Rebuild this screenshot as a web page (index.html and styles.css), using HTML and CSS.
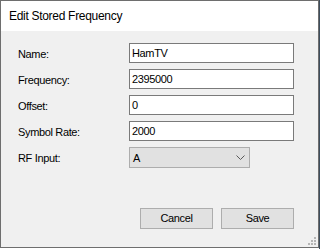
FILE: index.html
```html
<!DOCTYPE html>
<html>
<head>
<meta charset="utf-8">
<link rel="stylesheet" href="styles.css">
</head>
<body>
<div class="window">
  <div class="titlebar">Edit Stored Frequency</div>
  <div class="content">
    <div class="form">
      <div class="row"><div class="label">Name:</div><div class="field">HamTV</div></div>
      <div class="row"><div class="label">Frequency:</div><div class="field">2395000</div></div>
      <div class="row"><div class="label">Offset:</div><div class="field">0</div></div>
      <div class="row"><div class="label">Symbol Rate:</div><div class="field">2000</div></div>
      <div class="row combo-row"><div class="label">RF Input:</div>
        <div class="combo"><span>A</span>
          <svg class="chev" width="9" height="5" viewBox="0 0 9 5"><path d="M0.5 0.5 L4.5 4.5 L8.5 0.5" fill="none" stroke="#5a5a5a" stroke-width="1"/></svg>
        </div>
      </div>
    </div>
    <div class="buttons">
      <div class="btn">Cancel</div>
      <div class="btn">Save</div>
    </div>
    <svg class="grip" width="9" height="9" viewBox="0 0 9 9">
      <rect x="6" y="0" width="2" height="2" fill="#b5b5b5"/>
      <rect x="3" y="3" width="2" height="2" fill="#b5b5b5"/>
      <rect x="6" y="3" width="2" height="2" fill="#b5b5b5"/>
      <rect x="0" y="6" width="2" height="2" fill="#b5b5b5"/>
      <rect x="3" y="6" width="2" height="2" fill="#b5b5b5"/>
      <rect x="6" y="6" width="2" height="2" fill="#b5b5b5"/>
    </svg>
  </div>
</div>
</body>
</html>
```
FILE: styles.css
```css
html, body {
  margin: 0;
  padding: 0;
}
body {
  background: linear-gradient(to right, #ffffff 319px, #3e4d5c 319px);
  width: 320px;
  height: 249px;
  overflow: hidden;
  font-family: "Liberation Sans", Arial, sans-serif;
  font-size: 11px;
  letter-spacing: -0.35px;
  color: #000;
}
.window {
  width: 319px;
  height: 248px;
  box-sizing: border-box;
  border: 1px solid #6e6e6e;
  display: flex;
  flex-direction: column;
  background: #f0f0f0;
}
.titlebar {
  height: 30px;
  line-height: 30px;
  background: #ffffff;
  padding-left: 8px;
  font-size: 12px;
  letter-spacing: -0.3px;
  color: #000;
}
.content {
  position: relative;
  flex: 1;
  display: flex;
  flex-direction: column;
  padding: 12px 24px 0 17px;
}
.form {
  display: flex;
  flex-direction: column;
  gap: 6px;
}
.row {
  display: flex;
  align-items: center;
  height: 20px;
}
.combo-row {
  height: 21px;
}
.label {
  width: 111px;
  flex: none;
  padding-top: 1px;
}
.field {
  width: 166px;
  height: 20px;
  box-sizing: border-box;
  border: 1px solid #7a7a7a;
  background: #fff;
  padding-left: 2px;
  line-height: 18px;
}
.combo {
  width: 121px;
  height: 21px;
  box-sizing: border-box;
  border: 1px solid #adadad;
  background: #e1e1e1;
  display: flex;
  align-items: center;
  justify-content: space-between;
  padding: 0 4px 0 3px;
}
.chev {
  display: block;
}
.buttons {
  display: flex;
  justify-content: flex-end;
  gap: 8px;
  margin-top: 40px;
}
.btn {
  width: 73px;
  height: 21px;
  box-sizing: border-box;
  border: 1px solid #adadad;
  background: #e1e1e1;
  text-align: center;
  line-height: 19px;
}
.grip {
  position: absolute;
  right: 1px;
  bottom: 1px;
}
```
